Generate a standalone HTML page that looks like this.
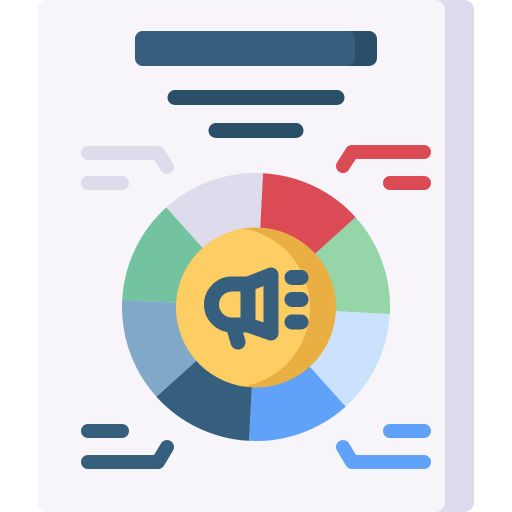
<html><body style="margin:0;background:#fff">
<svg width="512" height="512" viewBox="0 0 512 512" xmlns="http://www.w3.org/2000/svg">
<rect x="38" y="0" width="436" height="512" rx="10" fill="#dddaec"/>
<rect x="38" y="0" width="407" height="512" rx="10" fill="#f7f5f9"/>
<rect x="135" y="31" width="242" height="35" rx="8" fill="#2c4f69"/>
<rect x="135" y="31" width="220" height="35" rx="8" fill="#365e7d"/>
<g stroke-linecap="round" stroke-linejoin="round" fill="none" stroke-width="15">
<line x1="175" y1="97.5" x2="337" y2="97.5" stroke="#2c4f69"/>
<line x1="216" y1="130.5" x2="296" y2="130.5" stroke="#2c4f69"/>
<path d="M88 153H158L167 167" stroke="#dddbec" stroke-width="14"/>
<path d="M88 183H122" stroke="#dddbec" stroke-width="14"/>
<path d="M424 152H352L343 166" stroke="#db4b55" stroke-width="14"/>
<path d="M390 183H424" stroke="#db4b55" stroke-width="14"/>
<path d="M88 431H122" stroke="#365e7d" stroke-width="14"/>
<path d="M88 462H158L167 447" stroke="#365e7d" stroke-width="14"/>
<path d="M390 431H424" stroke="#60a2f9" stroke-width="14"/>
<path d="M424 462H352L343 447" stroke="#60a2f9" stroke-width="14"/>
</g>
<g transform="translate(256,307)">
<path d="M0 0L7 -133.8A134 134 0 0 1 99.6 -89.7Z" fill="#db4b55"/>
<path d="M0 0L99.6 -89.7A134 134 0 0 1 133.8 7Z" fill="#95d5a7"/>
<path d="M0 0L133.8 7A134 134 0 0 1 89.7 99.6Z" fill="#cbe2ff"/>
<path d="M0 0L89.7 99.6A134 134 0 0 1 -7 133.8Z" fill="#60a2f9"/>
<path d="M0 0L-7 133.8A134 134 0 0 1 -99.6 89.7Z" fill="#365e7d"/>
<path d="M0 0L-99.6 89.7A134 134 0 0 1 -133.8 -7Z" fill="#7fa8c9"/>
<path d="M0 0L-133.8 -7A134 134 0 0 1 -89.7 -99.6Z" fill="#74c3a0"/>
<path d="M0 0L-89.7 -99.6A134 134 0 0 1 7 -133.8Z" fill="#dddbec"/>
</g>
<clipPath id="c"><circle cx="256" cy="307.5" r="80"/></clipPath>
<circle cx="256" cy="307.5" r="80" fill="#eaaf43"/>
<circle cx="230" cy="307.5" r="80" fill="#fecd63" clip-path="url(#c)"/>
<g stroke="#365e7d" stroke-width="15" stroke-linecap="round" stroke-linejoin="round" fill="none">
<path d="M248 284L271 275V333L248 325Z"/>
<path d="M248 284H232A20.5 20.5 0 0 0 232 325H248Z"/>
<path d="M233 325L238 342"/>
<path d="M292 277.5H301M292 299.5H301M292 322H301"/>
</g>
</svg>
</body></html>
